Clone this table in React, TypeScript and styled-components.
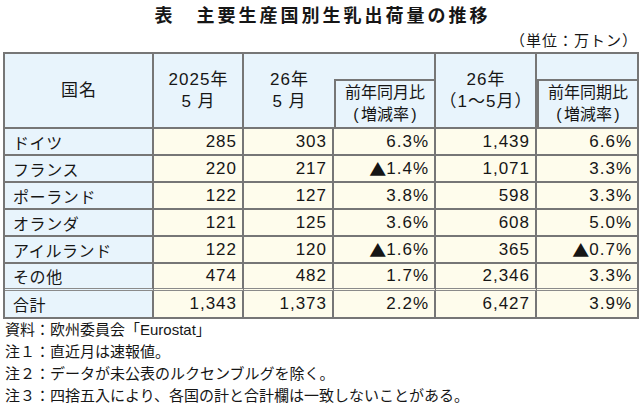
import React from 'react'
import styled, { createGlobalStyle } from 'styled-components'

const GlobalStyle = createGlobalStyle`
  html, body {
    margin: 0;
    padding: 0;
    background: #ffffff;
  }
  body {
    font-family: "Liberation Sans", "Noto Sans CJK JP", sans-serif;
    color: #161616;
  }
`

const Page = styled.div`
  width: 640px;
  height: 409px;
  overflow: hidden;
  box-sizing: border-box;
  padding: 0 1px 0 3px;
`

const Title = styled.h1`
  margin: 0;
  height: 28px;
  line-height: 28px;
  padding-left: 3px;
  text-align: center;
  font-family: "Noto Sans CJK JP", sans-serif;
  font-size: 18px;
  font-weight: 700;
  letter-spacing: 3px;
`

const Unit = styled.div`
  height: 24px;
  line-height: 24px;
  padding-right: 1px;
  text-align: right;
  font-family: "Noto Sans CJK JP", sans-serif;
  font-size: 15px;
  letter-spacing: 1px;
`

const Sheet = styled.div`
  display: grid;
  grid-template-columns: 149px 90px 90px 102px 101px 100px;
  grid-template-rows: 27px 48px repeat(6, 27px) 26px;
  border: 2px solid #767676;
  width: 632px;
`

const line = '2px solid #767676'

const Head = styled.div<{ $span?: boolean; $open?: boolean; $box?: boolean; $last?: boolean }>`
  box-sizing: border-box;
  grid-row: ${(p) => (p.$span ? 'span 2' : 'auto')};
  background: #e8f4fc;
  display: flex;
  flex-direction: column;
  align-items: center;
  justify-content: center;
  border-right: ${(p) => (p.$open || p.$last ? 'none' : line)};
  border-bottom: ${line};
  border-left: ${(p) => (p.$box ? line : 'none')};
  font-size: 17px;
  letter-spacing: 1px;
  line-height: 22px;
`

const HeadLine = styled.span<{ $small?: boolean }>`
  display: block;
  white-space: nowrap;
  font-size: ${(p) => (p.$small ? '16px' : '17px')};
  letter-spacing: ${(p) => (p.$small ? '0' : '1px')};
  padding-left: ${(p) => (p.$small ? '0' : '1px')};
`

const Paren = styled.span`
  display: inline-block;
  width: 10px;
  text-align: center;
  font-family: "Liberation Sans", sans-serif;
`

const Name = styled.div<{ $sep?: boolean; $end?: boolean }>`
  box-sizing: border-box;
  background: #e8f4fc;
  display: flex;
  align-items: center;
  padding-left: 8px;
  border-right: ${line};
  border-bottom: ${(p) => (p.$end ? 'none' : p.$sep ? '3px double #8a8a8a' : line)};
  font-family: "Noto Sans CJK JP", sans-serif;
  font-size: 16px;
  letter-spacing: 0.6px;
`

const Num = styled.div<{ $sep?: boolean; $end?: boolean; $last?: boolean }>`
  box-sizing: border-box;
  background: #fefcec;
  display: flex;
  align-items: center;
  justify-content: flex-end;
  padding-right: 5px;
  border-right: ${(p) => (p.$last ? 'none' : line)};
  border-bottom: ${(p) => (p.$end ? 'none' : p.$sep ? '3px double #8a8a8a' : line)};
  font-size: 17px;
  letter-spacing: 1px;
`

const Tri = styled.span`
  font-family: "Noto Sans CJK JP", sans-serif;
  font-size: 17px;
  letter-spacing: 0;
`

const Notes = styled.div`
  padding-left: 2px;
  font-size: 15px;
  line-height: 22px;
`

const Note = styled.div`
  white-space: nowrap;
`

const rows: string[][] = [
  ['ドイツ', '285', '303', '6.3%', '1,439', '6.6%'],
  ['フランス', '220', '217', '▲1.4%', '1,071', '3.3%'],
  ['ポーランド', '122', '127', '3.8%', '598', '3.3%'],
  ['オランダ', '121', '125', '3.6%', '608', '5.0%'],
  ['アイルランド', '122', '120', '▲1.6%', '365', '▲0.7%'],
  ['その他', '474', '482', '1.7%', '2,346', '3.3%'],
  ['合計', '1,343', '1,373', '2.2%', '6,427', '3.9%'],
]

const showValue = (v: string) =>
  v.startsWith('▲') ? (
    <>
      <Tri>▲</Tri>
      {v.slice(1)}
    </>
  ) : (
    v
  )

const App = () => {
  return (
    <Page>
      <GlobalStyle />
      <Title>表　主要生産国別生乳出荷量の推移</Title>
      <Unit>（単位：万トン）</Unit>

      <Sheet>
        <Head $span>
          <HeadLine>国名</HeadLine>
        </Head>
        <Head $span>
          <HeadLine>2025年</HeadLine>
          <HeadLine>5 月</HeadLine>
        </Head>
        <Head $span $open>
          <HeadLine>26年</HeadLine>
          <HeadLine>5 月</HeadLine>
        </Head>
        <Head />
        <Head $span>
          <HeadLine>26年</HeadLine>
          <HeadLine>（1～5月）</HeadLine>
        </Head>
        <Head $last />
        <Head $box>
          <HeadLine $small>前年同月比</HeadLine>
          <HeadLine $small>
            <Paren>(</Paren>増減率<Paren>)</Paren>
          </HeadLine>
        </Head>
        <Head $box $last>
          <HeadLine $small>前年同期比</HeadLine>
          <HeadLine $small>
            <Paren>(</Paren>増減率<Paren>)</Paren>
          </HeadLine>
        </Head>

        {rows.map((r, i) => {
          const sep = i === rows.length - 2
          const end = i === rows.length - 1
          return (
            <React.Fragment key={r[0]}>
              <Name $sep={sep} $end={end}>{r[0]}</Name>
              {r.slice(1).map((v, j) => (
                <Num key={j} $sep={sep} $end={end} $last={j === 4}>
                  {showValue(v)}
                </Num>
              ))}
            </React.Fragment>
          )
        })}
      </Sheet>

      <Notes>
        <Note>資料：欧州委員会「Eurostat」</Note>
        <Note>注１：直近月は速報値。</Note>
        <Note>注２：データが未公表のルクセンブルグを除く。</Note>
        <Note>注３：四捨五入により、各国の計と合計欄は一致しないことがある。</Note>
      </Notes>
    </Page>
  )
}

export default App
